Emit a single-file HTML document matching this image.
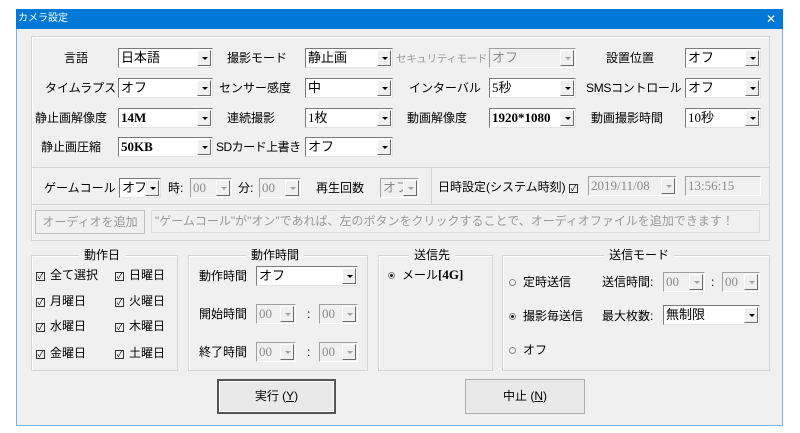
<!DOCTYPE html><html><head><meta charset="utf-8"><style>
*{margin:0;padding:0;box-sizing:border-box}
body{width:800px;height:433px;background:#fff;position:relative;overflow:hidden;font-family:"Liberation Sans","Noto Sans CJK JP",sans-serif;font-size:12px;line-height:15px;color:#000}
.a{position:absolute;white-space:nowrap}
#win{position:absolute;left:16px;top:9px;width:767px;height:417px;background:#f0f0f0;border:1px solid #7fb4e0}
#tb{position:absolute;left:16px;top:9px;width:767px;height:20px;background:#0078d7;color:#fff;font-size:10px;line-height:20px;padding-left:2px}
.gb{position:absolute;border:1px solid #d5d5d5;box-shadow:inset 1px 1px 0 #fff}
.cb{position:absolute;height:20px;background:#fff;border:1px solid #7a7a7a;border-right-color:#e3e3e3;border-bottom-color:#e3e3e3;font-family:"Liberation Serif","Noto Sans CJK JP",serif;font-size:13px;line-height:17px;padding-left:2px;overflow:hidden;white-space:nowrap}
.cb.d{background:#f0f0f0;color:#8a8a8a;border-color:#a0a0a0 #fff #fff #a0a0a0}
.ar{position:absolute;right:1px;top:1px;width:14px;height:16px;background:#f0f0f0;border:1px solid #fff;border-right-color:#6a6a6a;border-bottom-color:#6a6a6a}
.ar:after{content:"";position:absolute;left:4px;top:6px;border:3px solid transparent;border-top:3px solid #000;border-bottom:0}
.d .ar:after{border-top-color:#a0a0a0}
.lg{position:absolute;top:-8px;background:#f0f0f0;padding:0 5px;font-size:12px;line-height:15px}
.ck{display:inline-block;width:9px;height:9px;border:1px solid #333;margin-right:5px;position:relative;top:0px;font-size:8px;line-height:7px;text-align:center}
.btn{position:absolute;border:1px solid #adadad;background:#e9e9e9;text-align:center;font-size:12px}
.rd{display:inline-block;width:7px;height:7px;border-radius:50%;border:1px solid #888;margin-right:7px;position:relative}
.rd.on:after{content:"";position:absolute;left:1px;top:1px;width:3px;height:3px;border-radius:50%;background:#222}
.g{color:#999}
</style></head><body>
<div id="win"></div>
<div id="tb">カメラ設定</div>
<div class="a" style="left:766px;top:12px;color:#fff;font-size:12px;line-height:14px">✕</div>

<div class="gb" style="left:31px;top:36px;width:739px;height:205px"></div>
<div class="a" style="left:32px;top:167px;width:737px;height:1px;background:#d5d5d5"></div>
<div class="a" style="left:32px;top:204px;width:737px;height:1px;background:#d5d5d5"></div>
<div class="a" style="left:431px;top:168px;width:1px;height:36px;background:#d5d5d5"></div>

<!-- row1 -->
<div class="a" style="left:64px;top:51px">言語</div>
<div class="cb" style="left:118px;top:48px;width:95px">日本語<div class="ar"></div></div>
<div class="a" style="left:227px;top:51px">撮影モード</div>
<div class="cb" style="left:305px;top:48px;width:88px">静止画<div class="ar"></div></div>
<div class="a g" style="left:396px;top:52px;font-size:10.5px;letter-spacing:-0.3px">セキュリティモード</div>
<div class="cb d" style="left:489px;top:48px;width:87px">オフ<div class="ar"></div></div>
<div class="a" style="left:606px;top:51px">設置位置</div>
<div class="cb" style="left:685px;top:48px;width:76px">オフ<div class="ar"></div></div>
<!-- row2 -->
<div class="a" style="left:45px;top:81px">タイムラプス</div>
<div class="cb" style="left:118px;top:78px;width:95px">オフ<div class="ar"></div></div>
<div class="a" style="left:219px;top:81px">センサー感度</div>
<div class="cb" style="left:305px;top:78px;width:88px">中<div class="ar"></div></div>
<div class="a" style="left:409px;top:81px">インターバル</div>
<div class="cb" style="left:489px;top:78px;width:87px">5秒<div class="ar"></div></div>
<div class="a" style="left:586px;top:81px;letter-spacing:-0.3px">SMSコントロール</div>
<div class="cb" style="left:685px;top:78px;width:76px">オフ<div class="ar"></div></div>
<!-- row3 -->
<div class="a" style="left:35px;top:111px">静止画解像度</div>
<div class="cb" style="left:118px;top:108px;width:95px"><b>14M</b><div class="ar"></div></div>
<div class="a" style="left:227px;top:111px">連続撮影</div>
<div class="cb" style="left:305px;top:108px;width:88px">1枚<div class="ar"></div></div>
<div class="a" style="left:407px;top:111px">動画解像度</div>
<div class="cb" style="left:489px;top:108px;width:87px"><b>1920*1080</b><div class="ar"></div></div>
<div class="a" style="left:591px;top:111px">動画撮影時間</div>
<div class="cb" style="left:685px;top:108px;width:76px">10秒<div class="ar"></div></div>
<!-- row4 -->
<div class="a" style="left:41px;top:140px">静止画圧縮</div>
<div class="cb" style="left:118px;top:137px;width:95px"><b>50KB</b><div class="ar"></div></div>
<div class="a" style="left:216px;top:140px;letter-spacing:-0.5px">SDカード上書き</div>
<div class="cb" style="left:305px;top:137px;width:88px">オフ<div class="ar"></div></div>

<!-- game call -->
<div class="a" style="left:44px;top:181px">ゲームコール</div>
<div class="cb" style="left:119px;top:178px;width:42px;letter-spacing:-1px">オフ<div class="ar"></div></div>
<div class="a" style="left:168px;top:181px">時:</div>
<div class="cb d" style="left:190px;top:178px;width:42px">00<div class="ar"></div></div>
<div class="a" style="left:238px;top:181px">分:</div>
<div class="cb d" style="left:259px;top:178px;width:42px">00<div class="ar"></div></div>
<div class="a" style="left:316px;top:181px">再生回数</div>
<div class="cb d" style="left:380px;top:178px;width:39px">オフ<div class="ar"></div></div>
<div class="a" style="left:438px;top:180px">日時設定(システム時刻) <span class="ck">✓</span></div>
<div class="cb d" style="left:588px;top:176px;width:89px">2019/11/08<div class="ar"></div></div>
<div class="cb d" style="left:685px;top:176px;width:76px">13:56:15</div>
<!-- audio -->
<div class="btn g" style="left:35px;top:210px;width:110px;height:24px;line-height:22px;background:#f0f0f0;border-color:#c0c0c0">オーディオを追加</div>
<div class="a g" style="left:151px;top:210px;width:609px;height:23px;border:1px solid #dcdcdc;line-height:21px;padding-left:3px;font-size:12px">"ゲームコール"が"オン"であれば、左のボタンをクリックすることで、オーディオファイルを追加できます！</div>

<!-- 動作日 -->
<div class="gb" style="left:31px;top:255px;width:147px;height:116px"><span class="lg" style="left:47px">動作日</span></div>
<div class="a" style="left:36px;top:268px"><span class="ck">✓</span>全て選択</div>
<div class="a" style="left:115px;top:268px"><span class="ck">✓</span>日曜日</div>
<div class="a" style="left:36px;top:294px"><span class="ck">✓</span>月曜日</div>
<div class="a" style="left:115px;top:294px"><span class="ck">✓</span>火曜日</div>
<div class="a" style="left:36px;top:319px"><span class="ck">✓</span>水曜日</div>
<div class="a" style="left:115px;top:319px"><span class="ck">✓</span>木曜日</div>
<div class="a" style="left:36px;top:346px"><span class="ck">✓</span>金曜日</div>
<div class="a" style="left:115px;top:346px"><span class="ck">✓</span>土曜日</div>

<!-- 動作時間 -->
<div class="gb" style="left:188px;top:255px;width:180px;height:116px"><span class="lg" style="left:57px">動作時間</span></div>
<div class="a" style="left:199px;top:269px">動作時間</div>
<div class="cb" style="left:256px;top:266px;width:102px">オフ<div class="ar"></div></div>
<div class="a" style="left:199px;top:307px">開始時間</div>
<div class="cb d" style="left:256px;top:304px;width:40px">00<div class="ar"></div></div>
<div class="a" style="left:307px;top:307px">:</div>
<div class="cb d" style="left:319px;top:304px;width:39px">00<div class="ar"></div></div>
<div class="a" style="left:199px;top:345px">終了時間</div>
<div class="cb d" style="left:256px;top:342px;width:40px">00<div class="ar"></div></div>
<div class="a" style="left:307px;top:345px">:</div>
<div class="cb d" style="left:319px;top:342px;width:39px">00<div class="ar"></div></div>

<!-- 送信先 -->
<div class="gb" style="left:378px;top:255px;width:115px;height:116px"><span class="lg" style="left:30px">送信先</span></div>
<div class="a" style="left:388px;top:267px"><span class="rd on"></span>メール<b style="font-family:'Liberation Serif',serif;font-size:13px">[4G]</b></div>

<!-- 送信モード -->
<div class="gb" style="left:502px;top:255px;width:268px;height:116px"><span class="lg" style="left:101px">送信モード</span></div>
<div class="a" style="left:509px;top:275px"><span class="rd"></span>定時送信</div>
<div class="a" style="left:602px;top:275px">送信時間:</div>
<div class="cb d" style="left:663px;top:272px;width:42px">00<div class="ar"></div></div>
<div class="a" style="left:711px;top:275px">:</div>
<div class="cb d" style="left:722px;top:272px;width:38px">00<div class="ar"></div></div>
<div class="a" style="left:509px;top:309px"><span class="rd on"></span>撮影毎送信</div>
<div class="a" style="left:602px;top:309px">最大枚数:</div>
<div class="cb" style="left:663px;top:305px;width:97px">無制限<div class="ar"></div></div>
<div class="a" style="left:509px;top:343px"><span class="rd"></span>オフ</div>

<div class="btn" style="left:217px;top:379px;width:119px;height:35px;line-height:31px;border:2px solid #555;box-shadow:inset 0 0 0 1px #fff">実行 (<u>Y</u>)</div>
<div class="btn" style="left:465px;top:379px;width:120px;height:35px;line-height:33px">中止 (<u>N</u>)</div>
</body></html>
